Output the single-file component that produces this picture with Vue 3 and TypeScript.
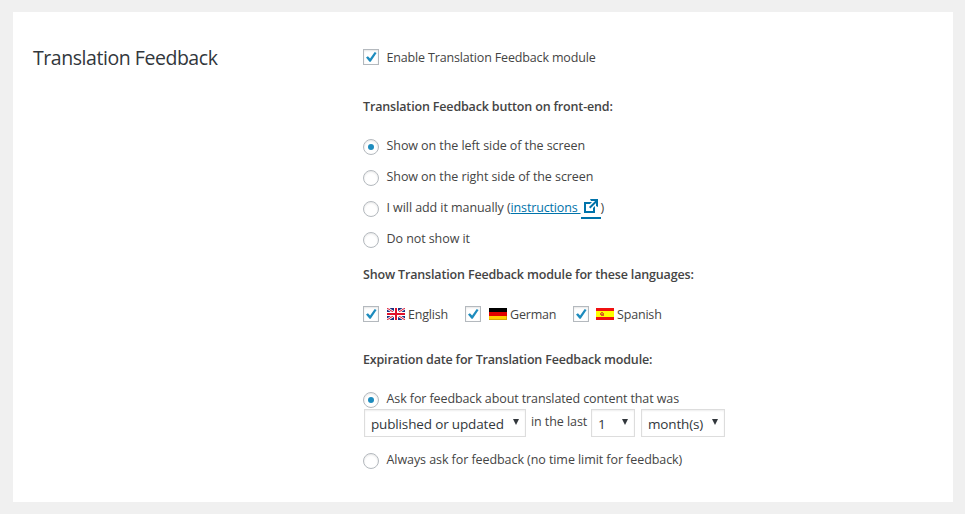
<script setup lang="ts">
import { ref } from 'vue'

const enabled = ref(true)
const placement = ref('left')
const expiry = ref('limited')
const positions = [
  { id: 'left', label: 'Show on the left side of the screen' },
  { id: 'right', label: 'Show on the right side of the screen' },
  { id: 'manual', label: 'I will add it manually (' },
  { id: 'none', label: 'Do not show it' },
]
const languages = ref([
  { id: 'en', label: 'English', on: true },
  { id: 'de', label: 'German', on: true },
  { id: 'es', label: 'Spanish', on: true },
])
</script>

<template>
  <main class="panel">
    <h1 class="title">Translation Feedback</h1>
    <section class="settings">
      <label class="row enable">
        <input v-model="enabled" class="native" type="checkbox" />
        <span class="box"><svg viewBox="0 0 16 16"><path d="M3 8.600 4.900 7.200l2.200 2.200L11.700 3l1.900 1-5.900 8.800H6.500z" /></svg></span>
        <span class="label">Enable Translation Feedback module</span>
      </label>

      <h2 class="sub front">Translation Feedback button on front-end:</h2>
      <div class="positions">
        <label v-for="p in positions" :key="p.id" class="row option">
          <input v-model="placement" class="native" type="radio" name="placement" :value="p.id" />
          <span class="radio" :class="{ on: placement === p.id }"></span>
          <span class="label">{{ p.label }}<template v-if="p.id === 'manual'"><a class="link" href="#"><span class="linktext">instructions&nbsp;</span><span class="ext"><svg viewBox="0 0 20 20"><path d="M9 3h8v8l-2-1V6.92l-5.6 5.59-1.41-1.41L14.08 5H10zm3 12v-3l2-2v7H3V6h8L9 8H5v7h7z" /></svg></span></a>)</template></span>
        </label>
      </div>

      <h2 class="sub langs">Show Translation Feedback module for these languages:</h2>
      <div class="languages">
        <label v-for="l in languages" :key="l.id" class="language" :class="l.id">
          <input v-model="l.on" class="native" type="checkbox" />
          <span class="box"><svg viewBox="0 0 16 16"><path d="M3 8.600 4.900 7.200l2.200 2.200L11.700 3l1.900 1-5.900 8.800H6.500z" /></svg></span>
          <svg v-if="l.id === 'en'" class="flag" viewBox="0 0 18 12">
            <path fill="#1d2f80" d="M0 0h18v12H0z" />
            <path stroke="#fff" stroke-width="2.6" d="m0 0 18 12M18 0 0 12" />
            <path stroke="#e0102b" stroke-width="1" d="m0 0 18 12M18 0 0 12" />
            <path stroke="#fff" stroke-width="4" d="M9 0v12M0 6h18" />
            <path stroke="#e0102b" stroke-width="2" d="M9 0v12M0 6h18" />
          </svg>
          <svg v-else-if="l.id === 'de'" class="flag" viewBox="0 0 18 12">
            <path d="M0 0h18v4H0z" />
            <path fill="#e00000" d="M0 4h18v4H0z" />
            <path fill="#fc0" d="M0 8h18v4H0z" />
            <path fill="#d9a600" d="M0 11h18v1H0zM17 8h1v4h-1z" />
          </svg>
          <svg v-else class="flag" viewBox="0 0 18 12">
            <path fill="#f01010" d="M0 0h18v12H0z" />
            <path fill="#ff0" d="M0 3h18v6H0z" />
            <path fill="#d8601c" d="M5 4h2v1h1v3H5V7H4V5h1z" />
            <path fill="#e8d020" d="M5.500 5h1v1h-1z" />
          </svg>
          <span class="label">{{ l.label }}</span>
        </label>
      </div>

      <h2 class="sub expiration">Expiration date for Translation Feedback module:</h2>
      <label class="row ask">
        <input v-model="expiry" class="native" type="radio" name="expiry" value="limited" />
        <span class="radio" :class="{ on: expiry === 'limited' }"></span>
        <span class="label">Ask for feedback about translated content that was</span>
      </label>
      <div class="period">
        <button class="select event" type="button"><span>published or updated</span><i class="arrow"></i></button>
        <span class="label between">in the last</span>
        <button class="select count" type="button"><span>1</span><i class="arrow"></i></button>
        <button class="select unit" type="button"><span>month(s)</span><i class="arrow"></i></button>
      </div>
      <label class="row always">
        <input v-model="expiry" class="native" type="radio" name="expiry" value="always" />
        <span class="radio" :class="{ on: expiry === 'always' }"></span>
        <span class="label">Always ask for feedback (no time limit for feedback)</span>
      </label>
    </section>
  </main>
</template>

<style>
body {
  background: #f0f0f0;
}
</style>

<style scoped>
.panel {
  box-sizing: border-box;
  display: flex;
  width: 940px;
  height: 490px;
  margin: 12px 0 12px 13px;
  padding: 36px 0 0 20px;
  background: #fff;
  color: #444;
  font-family: "Open Sans", "Noto Sans", sans-serif;
  font-size: 12.5px;
  line-height: 20px;
  white-space: nowrap;
}
.title {
  width: 330px;
  margin: -1px 0 0;
  color: #32373c;
  font-size: 19.5px;
  font-weight: 400;
  line-height: 22px;
  letter-spacing: -0.45px;
}
.settings {
  display: flex;
  flex-direction: column;
}
.row,
.language {
  display: flex;
  align-items: center;
}
.row {
  height: 20px;
}
.label {
  margin-left: -0.5px;
  letter-spacing: -0.07px;
}
.enable .label {
  letter-spacing: -0.16px;
}
.ask .label {
  letter-spacing: -0.1px;
}
.native {
  position: absolute;
  opacity: 0;
  pointer-events: none;
}
.box,
.radio {
  box-sizing: border-box;
  flex: none;
  width: 16px;
  height: 16px;
  margin-right: 8px;
  border: 1px solid #b4b9be;
  background: #fff;
  box-shadow: inset 0 1px 2px rgba(0, 0, 0, 0.1);
}
.box {
  margin-bottom: 2px;
}
.box svg {
  display: block;
  width: 16px;
  height: 16px;
  margin: -1px;
  fill: #1e8cbe;
}
.radio {
  display: grid;
  place-items: center;
  margin-top: 2px;
  border-radius: 50%;
}
.radio.on::before {
  content: "";
  width: 6px;
  height: 6px;
  border-radius: 50%;
  background: #1e8cbe;
}
.sub {
  height: 20px;
  margin: 0;
  font-size: 12.5px;
  font-weight: 600;
  line-height: 20px;
  letter-spacing: -0.16px;
}
.front {
  margin-top: 29px;
}
.positions {
  display: flex;
  flex-direction: column;
  gap: 11px;
  margin-top: 19px;
}
.link {
  color: #0073aa;
  text-decoration: none;
}
.linktext {
  text-decoration: underline;
  letter-spacing: -0.16px;
}
.ext {
  display: inline-block;
  width: 20px;
  height: 20px;
  margin: -1px 0;
  border-bottom: 2px solid #0073aa;
  vertical-align: top;
}
.ext svg {
  display: block;
  width: 20px;
  height: 20px;
  margin-top: -1px;
  fill: #0073aa;
}
.langs {
  margin-top: 16px;
}
.languages {
  display: flex;
  height: 20px;
  margin-top: 20px;
}
.language.en {
  width: 102px;
}
.language.de {
  width: 108px;
}
.language .label {
  margin-left: 0;
  letter-spacing: -0.18px;
}
.flag {
  width: 18px;
  height: 12px;
  margin: 0 3px 2px 0;
}
.es .flag {
  margin-left: -1px;
}
.expiration {
  margin-top: 25px;
  letter-spacing: -0.18px;
}
.ask {
  margin-top: 19px;
}
.period {
  display: flex;
  height: 28px;
  padding-left: 1px;
}
.period .between {
  width: 60px;
  margin-left: 5px;
  line-height: 25px;
}
.select {
  box-sizing: border-box;
  display: flex;
  align-items: center;
  justify-content: space-between;
  height: 28px;
  padding: 2px 6px 0;
  border: 1px solid #ddd;
  background: #fff;
  box-shadow: inset 0 1px 2px rgba(0, 0, 0, 0.07);
  color: #32373c;
  font: 400 13.5px "Open Sans", "Noto Sans", sans-serif;
  letter-spacing: -0.15px;
}
.event {
  width: 162px;
}
.count {
  width: 44px;
}
.unit {
  width: 84px;
  margin-left: 6px;
}
.arrow {
  width: 6px;
  height: 6px;
  margin-top: -4px;
  background: #32373c;
  clip-path: polygon(0 0, 100% 0, 50% 100%);
}
.always {
  margin-top: 13px;
}
</style>
